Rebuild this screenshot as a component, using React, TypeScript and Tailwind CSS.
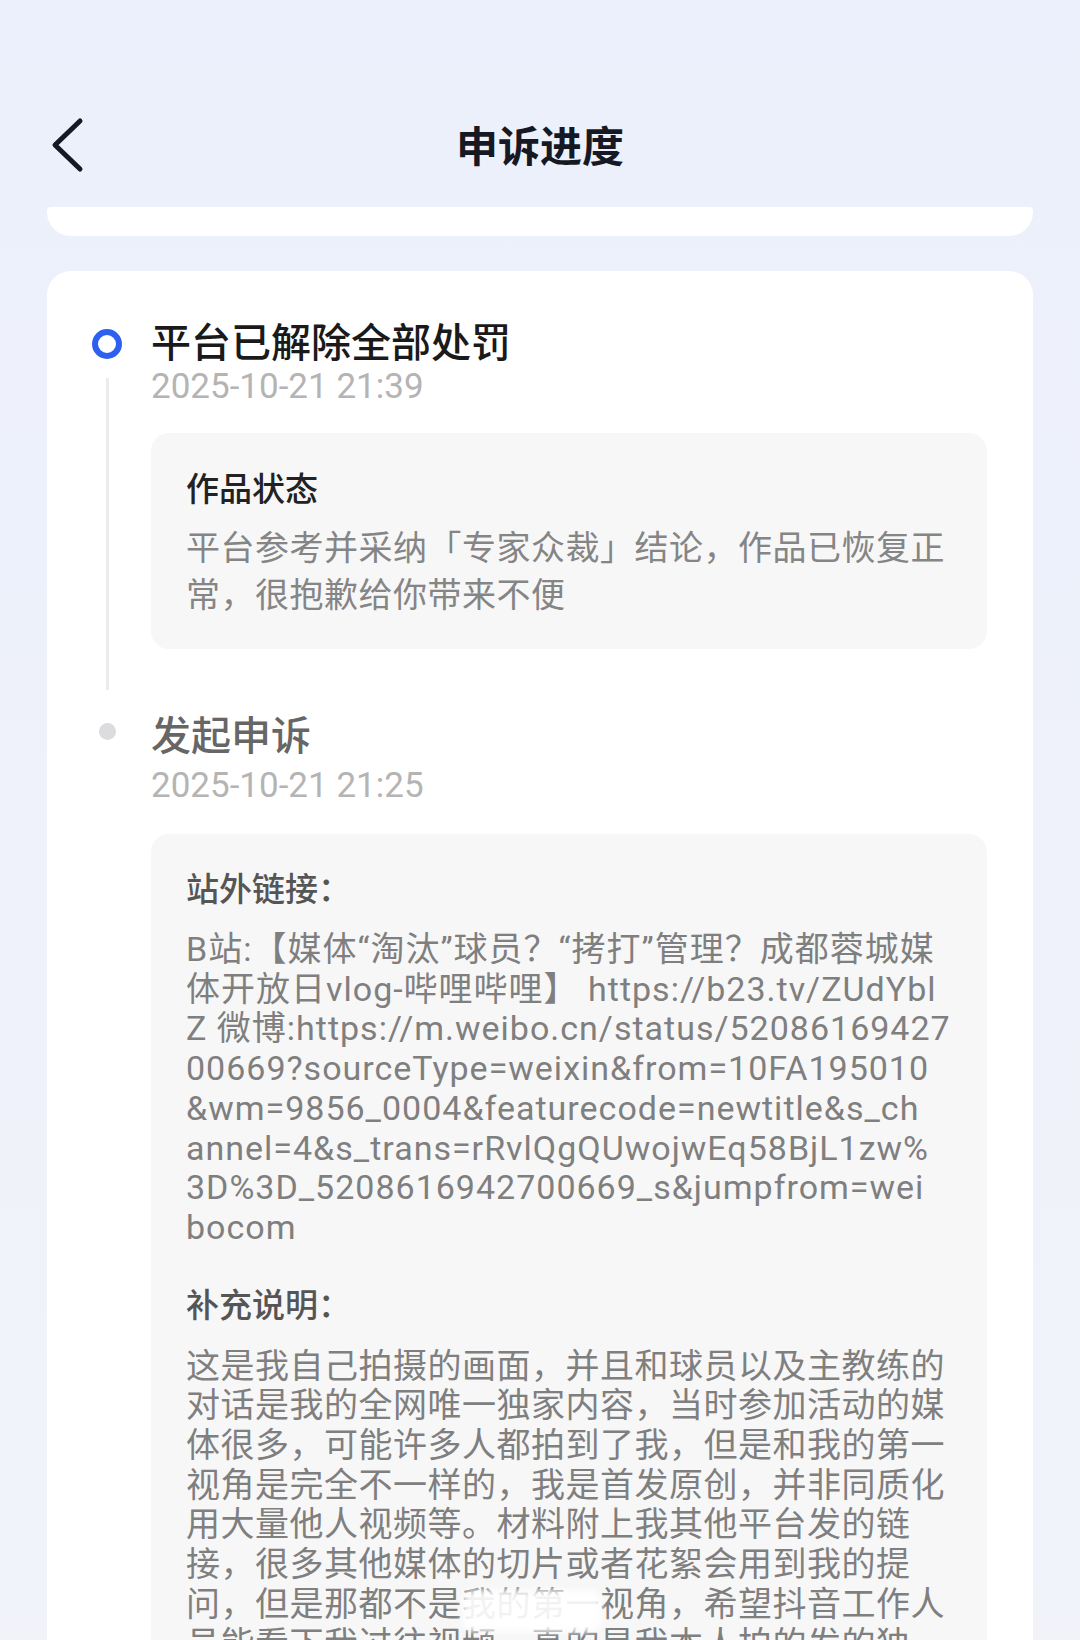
import React from 'react'

const linkLines = [
  'B站:【媒体“淘汰”球员？“拷打”管理？成都蓉城媒',
  '体开放日vlog-哔哩哔哩】 https://b23.tv/ZUdYbl',
  'Z 微博:https://m.weibo.cn/status/52086169427',
  '00669?sourceType=weixin&from=10FA195010',
  '&wm=9856_0004&featurecode=newtitle&s_ch',
  'annel=4&s_trans=rRvlQgQUwojwEq58BjL1zw%',
  '3D%3D_5208616942700669_s&jumpfrom=wei',
  'bocom',
]

const noteLines = [
  '这是我自己拍摄的画面，并且和球员以及主教练的',
  '对话是我的全网唯一独家内容，当时参加活动的媒',
  '体很多，可能许多人都拍到了我，但是和我的第一',
  '视角是完全不一样的，我是首发原创，并非同质化',
  '用大量他人视频等。材料附上我其他平台发的链',
  '接，很多其他媒体的切片或者花絮会用到我的提',
  '问，但是那都不是我的第一视角，希望抖音工作人',
  '员能看下我过往视频，真的是我本人拍的发的独',
]

const BackIcon = () => (
  <svg width="36" height="60" viewBox="0 0 36 60" fill="none">
    <path
      d="M30 6 L5 30 L30 54"
      stroke="#161823"
      strokeWidth="5"
      strokeLinecap="round"
      strokeLinejoin="round"
    />
  </svg>
)

export default function App() {
  return (
    <div className="relative h-[1640px] w-[1080px] overflow-hidden bg-gradient-to-b from-[#ecf0fc] to-[#f1f3f9] font-['Roboto','Noto_Sans_CJK_SC',sans-serif]">
      {/* header */}
      <div className="mt-[104px] grid h-[80px] grid-cols-[1fr_auto_1fr] items-center">
        <div className="pl-[50px] pt-[2px]">
          <BackIcon />
        </div>
        <div className="font-['Noto_Sans_CJK_SC',sans-serif] text-[42px] font-bold leading-none text-[#161823]">
          申诉进度
        </div>
        <div />
      </div>

      {/* bottom of the card above, scrolled under the header */}
      <div className="mx-[47px] mt-[23px] h-[29px] rounded-t-[4px] rounded-b-[24px] bg-white" />

      {/* timeline card */}
      <div className="mx-[47px] mt-[35px] rounded-[24px] bg-white pl-[42px] pr-[46px] pt-[45px]">
        {/* item 1 */}
        <div className="flex pb-[60px]">
          <div className="flex w-[36px] flex-col items-center">
            <div className="mt-[13px] h-[30px] w-[30px] rounded-full border-[6px] border-[#2d60ee]" />
            <div className="mt-[19px] mb-[-41px] w-[3px] flex-1 bg-[#ececec]" />
          </div>
          <div className="ml-[26px] flex-1">
            <div className="font-['Noto_Sans_CJK_SC',sans-serif] text-[40px] font-medium leading-[48px] text-[#1a1a1a]">
              平台已解除全部处罚
            </div>
            <div className="text-[35px] leading-[46px] text-[#b4b4b4]">2025-10-21 21:39</div>
            <div className="mt-[23px] rounded-[18px] bg-[#f7f7f8] px-[35px] pt-[32px] pb-[33px] font-['Noto_Sans_CJK_SC',sans-serif]">
              <div className="text-[33px] font-medium leading-[44px] text-[#222222]">作品状态</div>
              <div className="mt-[13px] text-[34px] leading-[47px] tracking-[0.5px] text-[#858585]">
                平台参考并采纳「专家众裁」结论，作品已恢复正
                <br />
                常，很抱歉给你带来不便
              </div>
            </div>
          </div>
        </div>

        {/* item 2 */}
        <div className="flex">
          <div className="flex w-[36px] flex-col items-center">
            <div className="mt-[14px] h-[17px] w-[17px] rounded-full bg-[#dcdcdf]" />
          </div>
          <div className="ml-[26px] flex-1">
            <div className="font-['Noto_Sans_CJK_SC',sans-serif] text-[40px] font-medium leading-[48px] text-[#666666]">
              发起申诉
            </div>
            <div className="mt-[6px] text-[35px] leading-[46px] text-[#b4b4b4]">2025-10-21 21:25</div>
            <div className="mt-[25px] rounded-[18px] bg-[#f7f7f8] px-[35px] pt-[31px] pb-[40px]">
              <div className="font-['Noto_Sans_CJK_SC',sans-serif] text-[33px] font-medium leading-[44px] text-[#555555]">
                站外链接：
              </div>
              <div className="mt-[21px] text-[34px] leading-[39.7px] tracking-[1px] text-[#7f7f7f]">
                {linkLines.map((line) => (
                  <div key={line} className="whitespace-nowrap">
                    {line}
                  </div>
                ))}
              </div>
              <div className="mt-[33px] font-['Noto_Sans_CJK_SC',sans-serif] text-[33px] font-medium leading-[44px] text-[#555555]">
                补充说明：
              </div>
              <div className="mt-[19px] font-['Noto_Sans_CJK_SC',sans-serif] text-[34px] leading-[39.7px] tracking-[0.5px] text-[#7f7f7f]">
                {noteLines.map((line) => (
                  <div key={line} className="whitespace-nowrap">
                    {line}
                  </div>
                ))}
              </div>
            </div>
          </div>
        </div>
      </div>

      {/* watermark */}
      <div className="absolute left-[462px] top-[1590px] h-[42px] w-[140px] rounded-[12px] bg-white/90 blur-[3px]" />
    </div>
  )
}
